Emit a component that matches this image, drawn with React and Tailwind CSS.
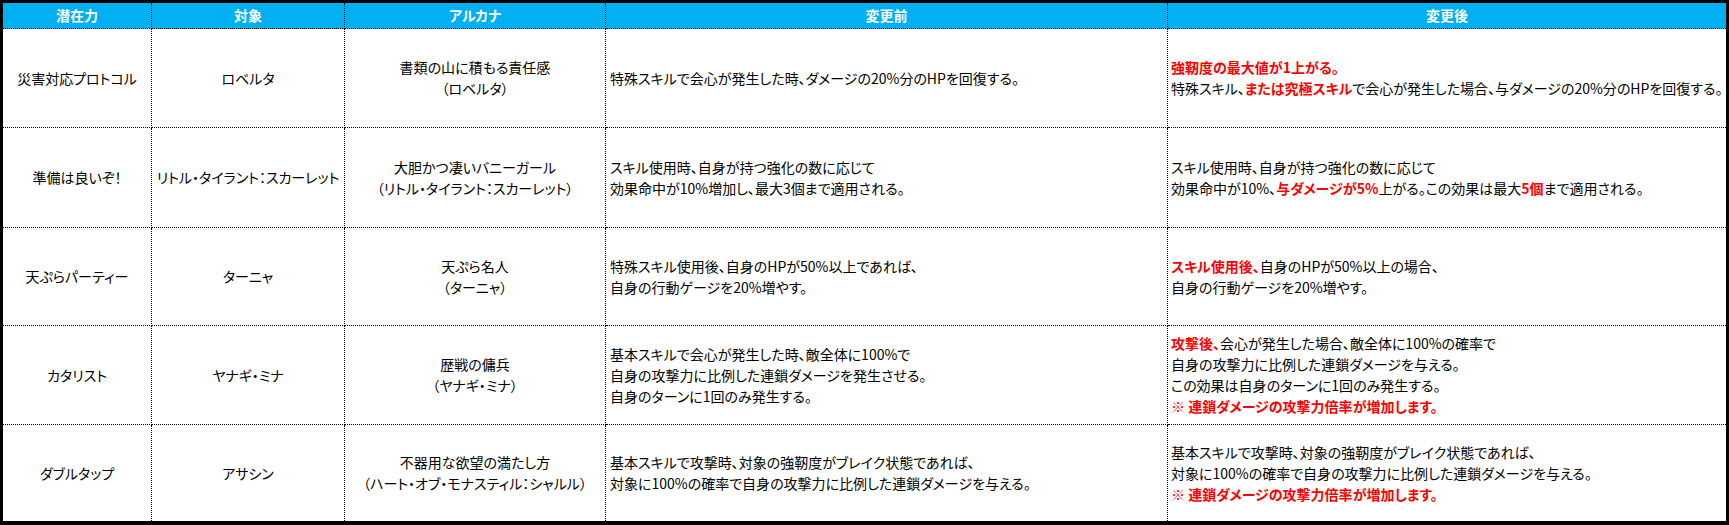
const R = ({ children }) => <span className="font-bold text-[#ff0000]">{children}</span>;

const rows = [
  {
    skill: "災害対応プロトコル",
    target: "ロベルタ",
    arcana: ["書類の山に積もる責任感", "（ロベルタ）"],
    before: ["特殊スキルで会心が発生した時、ダメージの20%分のHPを回復する。"],
    after: [
      <R>強靭度の最大値が1上がる。</R>,
      <>特殊スキル、<R>または究極スキル</R>で会心が発生した場合、与ダメージの20%分のHPを回復する。</>,
    ],
  },
  {
    skill: "準備は良いぞ！",
    target: "リトル・タイラント：スカーレット",
    arcana: ["大胆かつ凄いバニーガール", "（リトル・タイラント：スカーレット）"],
    before: ["スキル使用時、自身が持つ強化の数に応じて", "効果命中が10%増加し、最大3個まで適用される。"],
    after: [
      "スキル使用時、自身が持つ強化の数に応じて",
      <>効果命中が10%、<R>与ダメージが5%</R>上がる。この効果は最大<R>5個</R>まで適用される。</>,
    ],
  },
  {
    skill: "天ぷらパーティー",
    target: "ターニャ",
    arcana: ["天ぷら名人", "（ターニャ）"],
    before: ["特殊スキル使用後、自身のHPが50%以上であれば、", "自身の行動ゲージを20%増やす。"],
    after: [
      <><R>スキル使用後、</R>自身のHPが50%以上の場合、</>,
      "自身の行動ゲージを20%増やす。",
    ],
  },
  {
    skill: "カタリスト",
    target: "ヤナギ・ミナ",
    arcana: ["歴戦の傭兵", "（ヤナギ・ミナ）"],
    before: [
      "基本スキルで会心が発生した時、敵全体に100%で",
      "自身の攻撃力に比例した連鎖ダメージを発生させる。",
      "自身のターンに1回のみ発生する。",
    ],
    after: [
      <><R>攻撃後、</R>会心が発生した場合、敵全体に100%の確率で</>,
      "自身の攻撃力に比例した連鎖ダメージを与える。",
      "この効果は自身のターンに1回のみ発生する。",
      <R>※ 連鎖ダメージの攻撃力倍率が増加します。</R>,
    ],
  },
  {
    skill: "ダブルタップ",
    target: "アサシン",
    arcana: ["不器用な欲望の満たし方", "（ハート・オブ・モナスティル：シャルル）"],
    before: [
      "基本スキルで攻撃時、対象の強靭度がブレイク状態であれば、",
      "対象に100%の確率で自身の攻撃力に比例した連鎖ダメージを与える。",
    ],
    after: [
      "基本スキルで攻撃時、対象の強靭度がブレイク状態であれば、",
      "対象に100%の確率で自身の攻撃力に比例した連鎖ダメージを与える。",
      <R>※ 連鎖ダメージの攻撃力倍率が増加します。</R>,
    ],
  },
];

const headers = ["潜在力", "対象", "アルカナ", "変更前", "変更後"];

function Lines({ items }) {
  return items.map((t, i) => (
    <div key={i} className="whitespace-nowrap">
      {t}
    </div>
  ));
}

export default function App() {
  return (
    <div className="w-[1729px] h-[525px] bg-white font-['Noto_Sans_CJK_JP','Noto_Sans',sans-serif] [font-feature-settings:'palt'] text-[14px] leading-[21px] text-black">
      <div className="w-full h-full border-[3px] border-b-4 border-black grid grid-cols-[149px_193px_261px_562px_1fr] grid-rows-[26px_99px_100px_98px_99px_1fr]">
        {headers.map((h, i) => (
          <div
            key={h}
            className={`bg-[#00b0f0] text-white font-bold flex items-center justify-center border-b border-dotted border-black ${i < 4 ? "border-r" : ""}`}
          >
            {h}
          </div>
        ))}
        {rows.map((r, ri) => {
          const bb = ri < rows.length - 1 ? "border-b" : "";
          return [
            <div key={`a${ri}`} className={`flex items-center justify-center border-r border-dotted border-black ${bb}`}>
              {r.skill}
            </div>,
            <div key={`b${ri}`} className={`flex items-center justify-center border-r border-dotted border-black ${bb}`}>
              {r.target}
            </div>,
            <div key={`c${ri}`} className={`flex flex-col items-center justify-center text-center border-r border-dotted border-black ${bb}`}>
              <Lines items={r.arcana} />
            </div>,
            <div key={`d${ri}`} className={`flex flex-col justify-center pl-1 border-r border-dotted border-black ${bb}`}>
              <Lines items={r.before} />
            </div>,
            <div key={`e${ri}`} className={`flex flex-col justify-center pl-[3px] border-dotted border-black ${bb}`}>
              <Lines items={r.after} />
            </div>,
          ];
        })}
      </div>
    </div>
  );
}
